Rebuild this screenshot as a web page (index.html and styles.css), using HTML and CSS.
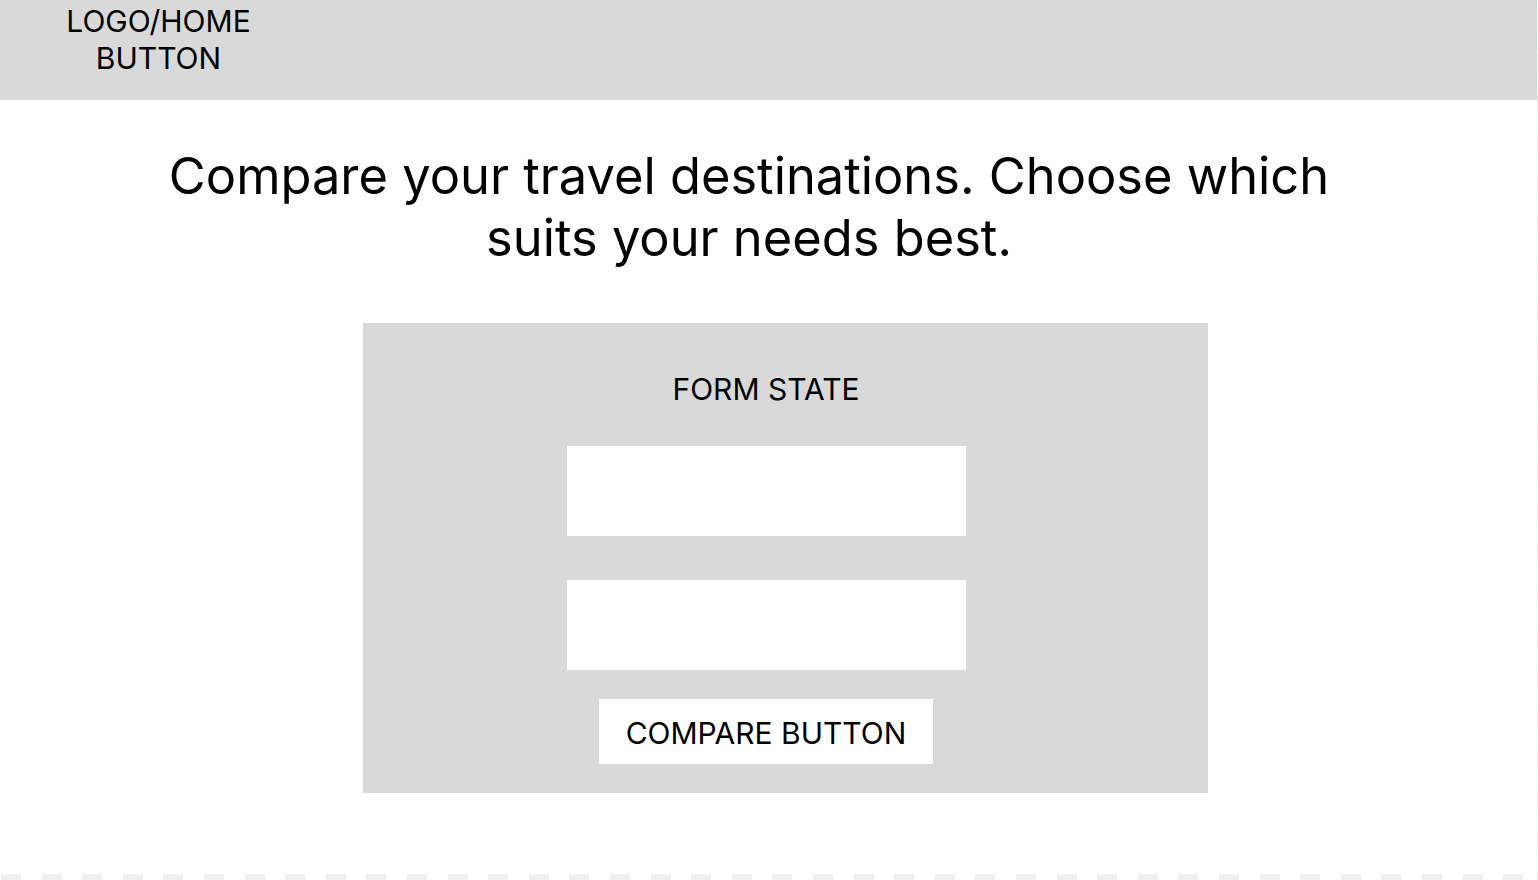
FILE: index.html
```html
<!DOCTYPE html>
<html lang="en">
<head>
<meta charset="utf-8">
<title>Compare destinations</title>
<link rel="stylesheet" href="styles.css">
</head>
<body>
<div class="page">
  <header class="topbar">
    <div class="logo">LOGO/HOME<br>BUTTON</div>
  </header>
  <h1 class="headline">Compare your travel destinations. Choose which<br>suits your needs best.</h1>
  <section class="form-box">
    <div class="form-inner">
      <div class="form-title">FORM STATE</div>
      <div class="field"></div>
      <div class="field field-second"></div>
      <div class="compare-btn">COMPARE BUTTON</div>
    </div>
  </section>
  <div class="spacer"></div>
  <div class="bottom-dashes"></div>
</div>
</body>
</html>
```

FILE: styles.css
```css
html, body {
  margin: 0;
  padding: 0;
  background: #ffffff;
}
body {
  font-family: Inter, "Noto Sans", sans-serif;
  color: #000;
  width: 1538px;
  height: 880px;
  overflow: hidden;
  background:
    repeating-linear-gradient(to bottom, #f0f0f0 0 20px, transparent 20px 41px) right 12px / 1px 100% no-repeat,
    #ffffff;
}
.page {
  display: flex;
  flex-direction: column;
  height: 880px;
}
.topbar {
  height: 100px;
  width: 1537px;
  background: #d9d9d9;
  display: flex;
  align-items: flex-start;
  flex-shrink: 0;
}
.logo {
  width: 317px;
  text-align: center;
  font-size: 30px;
  line-height: 37px;
  padding-top: 3px;
}
.headline {
  margin: 45px 0 0 0;
  padding-right: 40px;
  text-align: center;
  font-weight: 400;
  font-size: 50.6px;
  line-height: 62px;
}
.form-box {
  margin: 54px 0 0 363px;
  width: 845px;
  height: 470px;
  background: #d9d9d9;
  flex-shrink: 0;
}
.form-inner {
  display: flex;
  flex-direction: column;
  align-items: center;
  padding: 48px 39px 0 0;
}
.form-title {
  font-size: 30px;
  line-height: 36px;
  height: 36px;
}
.field {
  width: 399px;
  height: 90px;
  background: #fff;
  margin-top: 39px;
}
.field-second {
  margin-top: 44px;
}
.compare-btn {
  margin-top: 29px;
  width: 334px;
  height: 65px;
  background: #fff;
  display: flex;
  align-items: center;
  justify-content: center;
  font-size: 30px;
  line-height: 36px;
  padding-top: 2px;
  box-sizing: border-box;
}
.spacer {
  flex: 1;
}
.bottom-dashes {
  height: 6px;
  flex-shrink: 0;
  background: repeating-linear-gradient(to right, #f0f0f0 0 20px, transparent 20px 40.6px);
  margin-left: 1px;
}
```
